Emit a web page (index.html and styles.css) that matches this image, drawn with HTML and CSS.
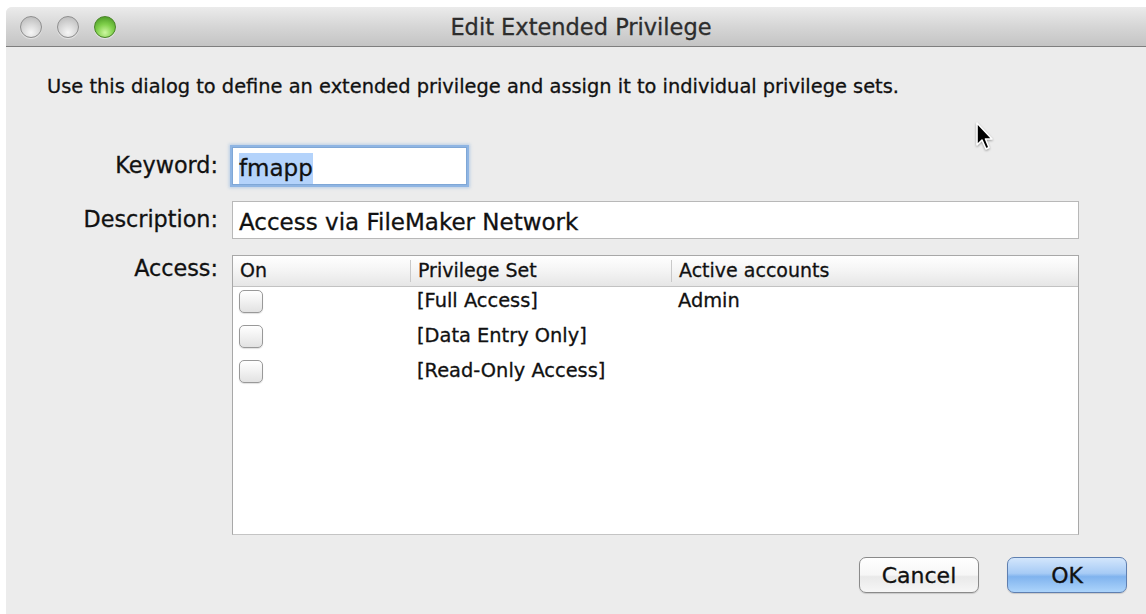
FILE: index.html
```html
<!DOCTYPE html>
<html>
<head>
<meta charset="utf-8">
<title>Edit Extended Privilege</title>
<link rel="stylesheet" href="styles.css">
</head>
<body>
<div class="window">
  <div class="titlebar">
    <div class="lights">
      <span class="light gray"></span>
      <span class="light gray"></span>
      <span class="light green"></span>
    </div>
    <div class="title">Edit Extended Privilege</div>
  </div>
  <div class="content">
    <p class="intro">Use this dialog to define an extended privilege and assign it to individual privilege sets.</p>
    <div class="form">
      <label class="label">Keyword:</label>
      <div class="field keyword"><span class="sel">fmapp</span></div>
      <label class="label">Description:</label>
      <div class="field desc">Access via FileMaker Network</div>
      <label class="label access-label">Access:</label>
      <div class="table">
        <div class="thead">
          <div class="th c-on">On</div>
          <div class="th c-set">Privilege Set</div>
          <div class="th c-acc">Active accounts</div>
        </div>
        <div class="row">
          <div class="c-on"><span class="check"></span></div>
          <div class="c-set">[Full Access]</div>
          <div class="c-acc">Admin</div>
        </div>
        <div class="row">
          <div class="c-on"><span class="check"></span></div>
          <div class="c-set">[Data Entry Only]</div>
          <div class="c-acc"></div>
        </div>
        <div class="row">
          <div class="c-on"><span class="check"></span></div>
          <div class="c-set">[Read-Only Access]</div>
          <div class="c-acc"></div>
        </div>
      </div>
    </div>
    <div class="buttons">
      <button class="btn">Cancel</button>
      <button class="btn primary">OK</button>
    </div>
  </div>
  <svg class="cursor" width="22" height="32" viewBox="0 0 22 32">
    <path d="M2 2 L2 24 L7 19 L11 28 L14 26.5 L10.5 18 L17 18 Z" fill="#000" stroke="#fff" stroke-width="1.6" stroke-linejoin="round"/>
  </svg>
</div>
</body>
</html>
```

FILE: styles.css
```css
html, body {
  margin: 0;
  padding: 0;
  background: #ffffff;
}

body {
  font-family: "DejaVu Sans", Verdana, sans-serif;
  color: #111;
  width: 1146px;
  height: 614px;
  overflow: hidden;
  -webkit-text-stroke: 0.3px currentColor;
}

.window {
  position: relative;
  margin: 7px 0 0 6px;
  height: 607px;
  background: #ececec;
  border-top-left-radius: 6px;
  overflow: hidden;
}

.titlebar {
  height: 39px;
  display: flex;
  align-items: center;
  position: relative;
  background: linear-gradient(#ebebeb, #d6d6d6 50%, #c4c4c4);
  border-bottom: 1px solid #7e7e7e;
}

.lights {
  display: flex;
  gap: 15px;
  padding-left: 14px;
  position: relative;
  z-index: 1;
}

.light {
  width: 22px;
  height: 22px;
  border-radius: 50%;
  box-sizing: border-box;
  box-shadow: 0 1px 1px rgba(255, 255, 255, 0.5);
}

.light.gray {
  border: 1px solid #8f8f8f;
  background: radial-gradient(circle at 50% 78%, #f6f6f6 0, #d9d9d9 45%, #b4b4b4 100%);
}

.light.green {
  border: 1px solid #4a8528;
  background: radial-gradient(circle at 50% 78%, #cdf7a0 0, #80d04b 45%, #3d8c1b 100%);
}

.title {
  position: absolute;
  left: 10px;
  right: 0;
  text-align: center;
  font-size: 22.5px;
  color: #2d2d2d;
}

.content {
  padding: 28px 0 0 41px;
}

.intro {
  margin: 0;
  font-size: 19.4px;
  line-height: 24px;
}

.form {
  display: grid;
  grid-template-columns: 171px 847px;
  column-gap: 14px;
  row-gap: 16px;
  margin-top: 48px;
}

.label {
  font-size: 22.3px;
  text-align: right;
  line-height: 36px;
}

.access-label {
  line-height: 26px;
}

.field {
  height: 38px;
  box-sizing: border-box;
  background: #fff;
  border: 1px solid #b8b8b8;
  font-size: 23px;
  line-height: 40px;
  padding-left: 6px;
}

.keyword {
  width: 235px;
  border-color: #7fa7d6;
  box-shadow: 0 0 0 2px #8fb5e3, 0 0 3px 3px rgba(110, 160, 220, 0.4);
}

.sel {
  background: #b4d3fb;
  padding: 2px 0 3px;
}

.table {
  height: 280px;
  box-sizing: border-box;
  background: #fff;
  border: 1px solid #a8a8a8;
  border-bottom-color: #c4c4c4;
}

.thead {
  display: flex;
  height: 31px;
  box-sizing: border-box;
  background: linear-gradient(#ffffff, #f4f4f4 50%, #e6e6e6);
  border-bottom: 1px solid #c2c2c2;
  font-size: 19px;
  line-height: 29px;
}

.th {
  box-sizing: border-box;
  padding-left: 7px;
}

.th.c-set, .th.c-acc {
  border-left: 1px solid #c9c9c9;
  margin: 4px 0;
  line-height: 21px;
}

.c-on { width: 177px; }
.c-set { width: 261px; }
.c-acc { flex: 1; }

.row {
  display: flex;
  height: 35px;
  font-size: 19.4px;
  line-height: 28px;
}

.row .c-on {
  padding-left: 6px;
  box-sizing: border-box;
  padding-top: 3px;
}

.row .c-set { padding-left: 7px; box-sizing: border-box; }
.row .c-acc { padding-left: 7px; }

.check {
  display: block;
  width: 24px;
  height: 23px;
  box-sizing: border-box;
  border: 1px solid #999;
  border-radius: 5px;
  background: linear-gradient(#ffffff, #f1f1f1 50%, #e2e2e2);
  box-shadow: 0 1px 1px rgba(0, 0, 0, 0.12);
}

.buttons {
  display: flex;
  justify-content: flex-end;
  gap: 28px;
  padding-right: 19px;
  margin-top: 22px;
}

.btn {
  width: 120px;
  height: 36px;
  font-family: inherit;
  font-size: 22px;
  color: #111;
  border-radius: 7px;
  border: 1px solid #8a8a8a;
  background: linear-gradient(#ffffff, #f6f6f6 50%, #e9e9e9 55%, #f6f6f6);
  box-shadow: 0 1px 1px rgba(0, 0, 0, 0.15);
  padding: 0;
  -webkit-text-stroke: 0.3px currentColor;
}

.btn.primary {
  border-color: #5f7fb0;
  background: linear-gradient(#d3e6fc, #a7cbf5 45%, #80b3ee 55%, #acd4fb);
}

.cursor {
  position: absolute;
  left: 969px;
  top: 114px;
  filter: drop-shadow(0 1px 1px rgba(0, 0, 0, 0.35));
}
```
